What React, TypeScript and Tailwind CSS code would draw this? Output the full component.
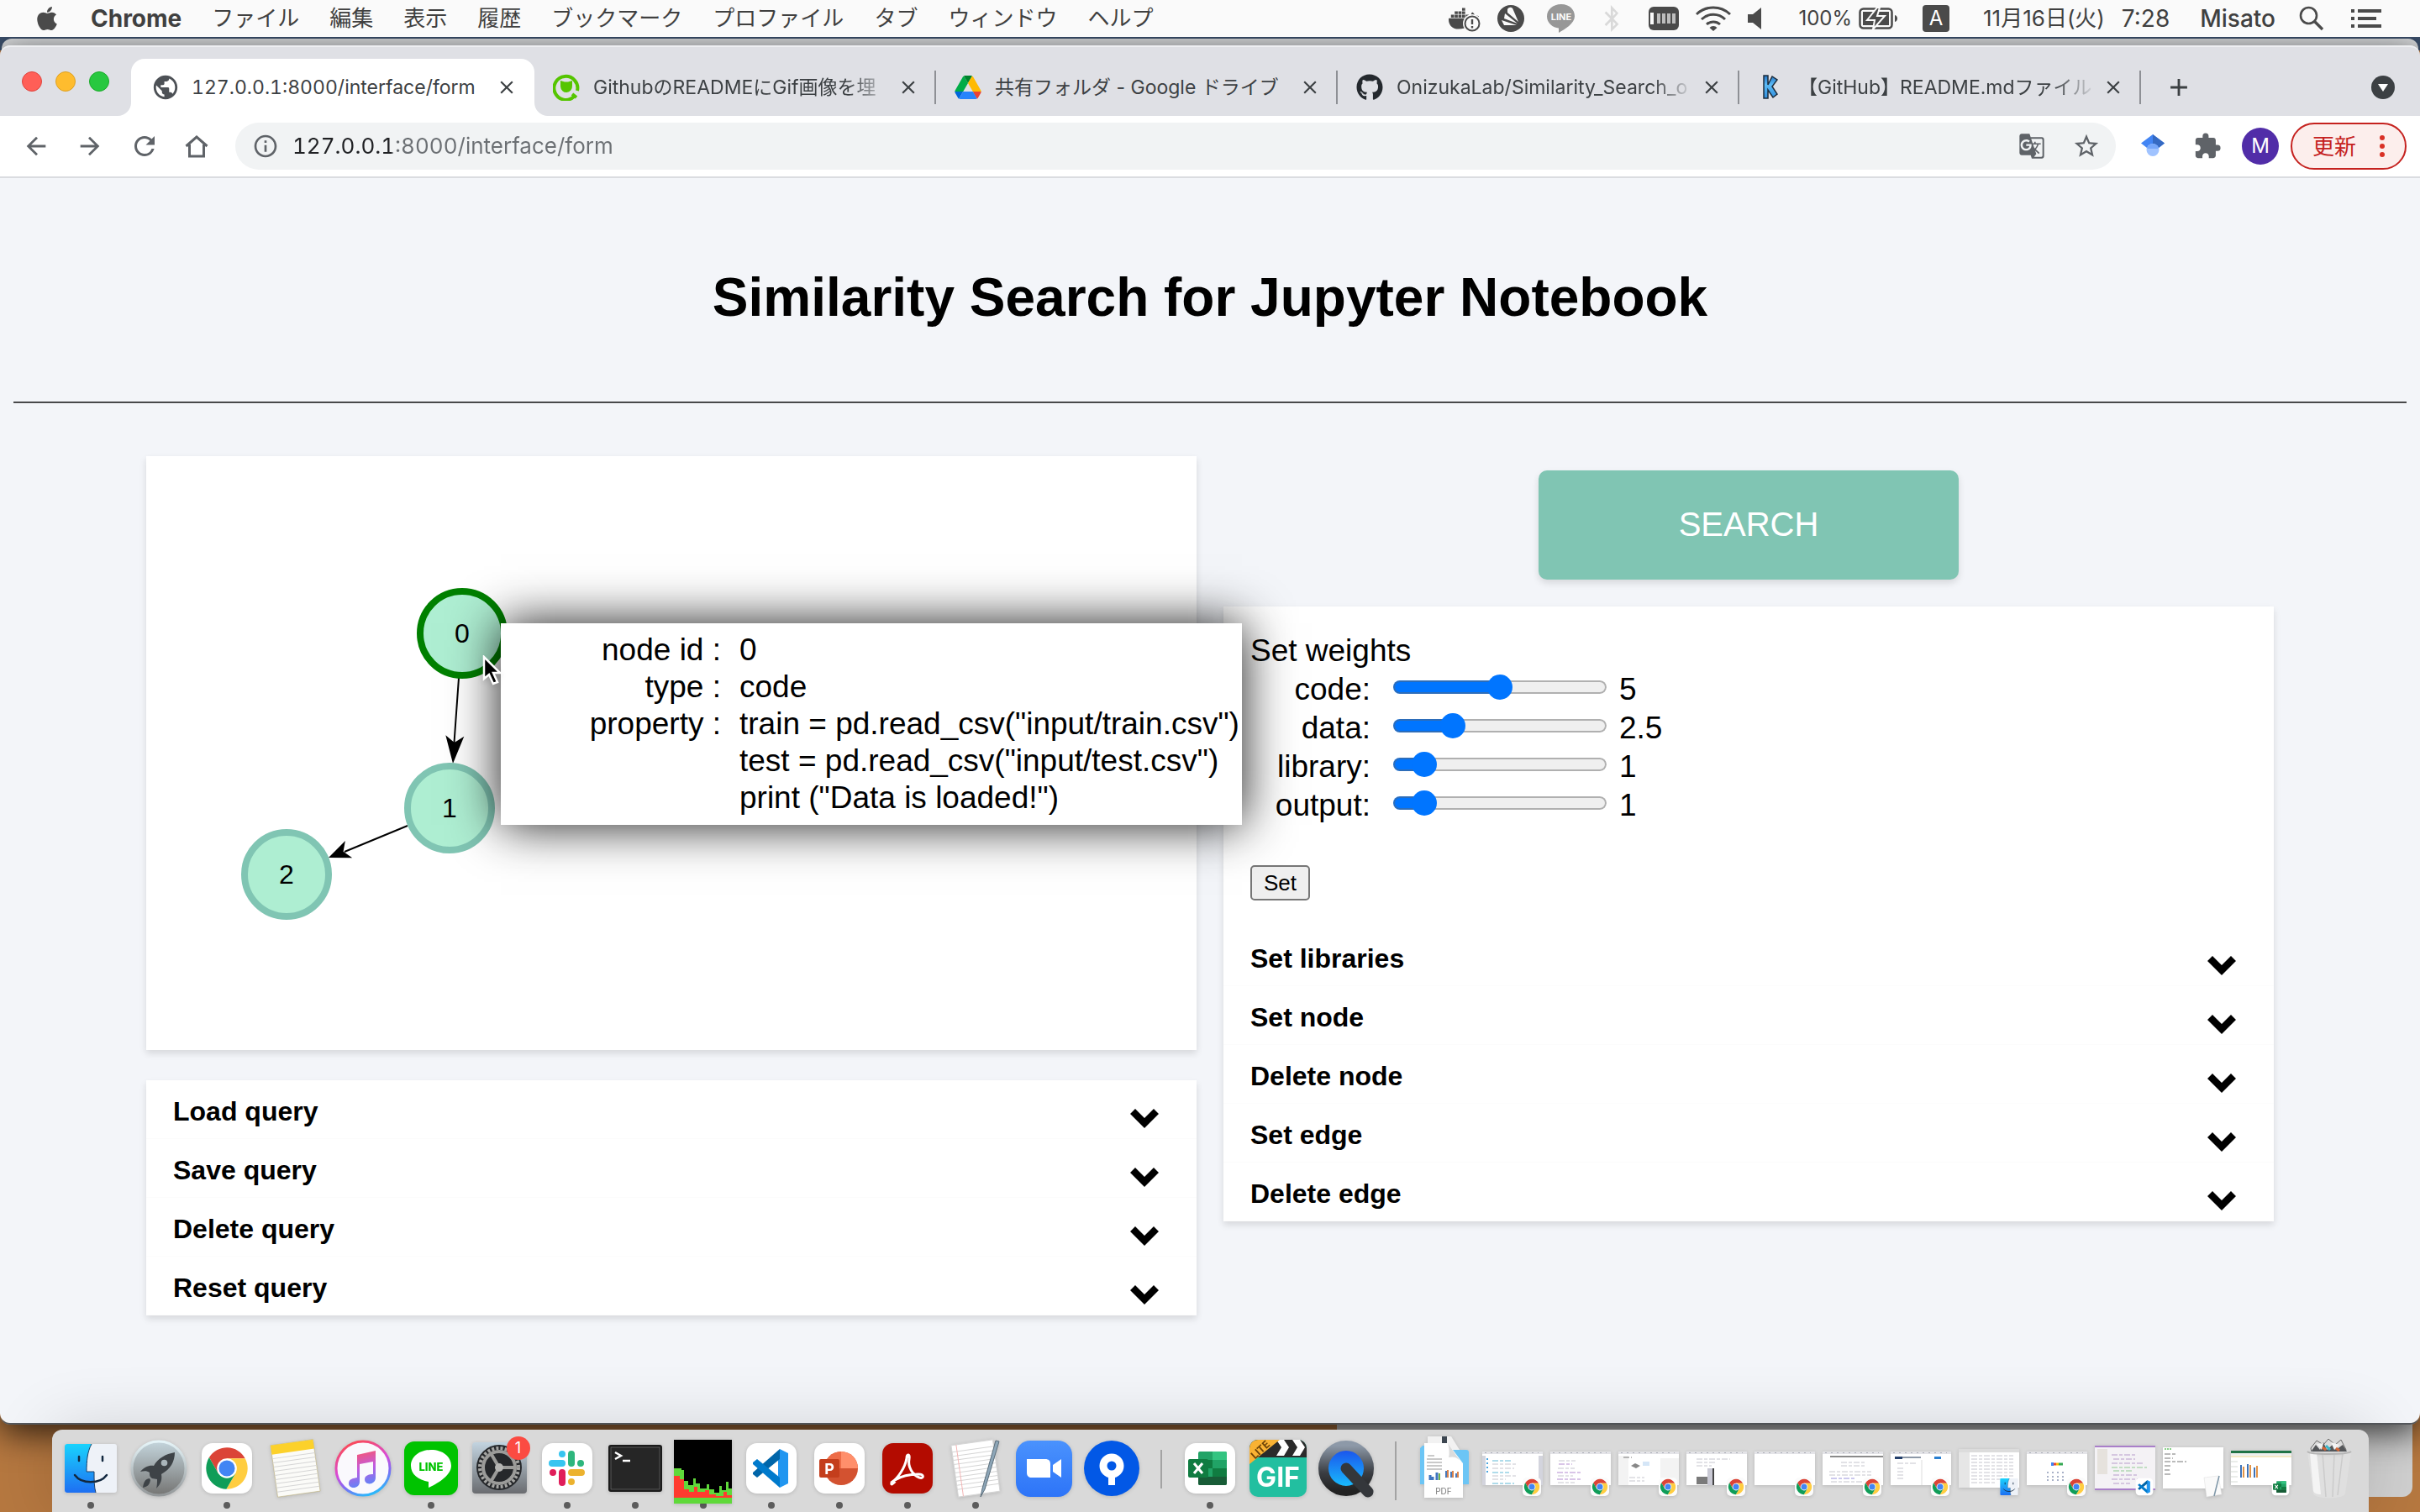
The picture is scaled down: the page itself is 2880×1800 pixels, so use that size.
import React, { useState } from 'react';
import { FaApple, FaBluetoothB, FaDocker, FaGithub } from 'react-icons/fa';
import {
  MdAdd,
  MdArrowBack,
  MdArrowForward,
  MdClose,
  MdExtension,
  MdGTranslate,
  MdInfoOutline,
  MdPublic,
  MdRefresh,
  MdStarOutline,
} from 'react-icons/md';

/* ---------- Menu bar ---------- */

const MENUS = ['ファイル', '編集', '表示', '履歴', 'ブックマーク', 'プロファイル', 'タブ', 'ウィンドウ', 'ヘルプ'];

function MenuBar() {
  return (
    <header className="relative z-30 flex h-11 items-center justify-between bg-[#fafafa] text-[26px] leading-9 text-[#404040]">
      <nav className="flex items-center gap-9 pl-10">
        <button aria-label="Apple" className="text-[#4a4a4a]">
          <FaApple size={32} />
        </button>
        <button className="text-[28px] leading-9 font-bold">Chrome</button>
        {MENUS.map((m) => (
          <button key={m}>{m}</button>
        ))}
      </nav>
      <div className="flex items-center pr-[46px]">
        <span className="relative mr-[22px] flex text-[#4a4a4a]">
          <FaDocker size={36} />
          <svg viewBox="0 0 24 24" className="absolute -right-1 top-3 size-6">
            <circle cx="12" cy="12" r="11" fill="#fafafa" />
            <circle cx="12" cy="12" r="8.500" fill="none" stroke="#4a4a4a" strokeWidth="2" />
            <path d="M12 7v6M12 15v2.4" stroke="#4a4a4a" strokeWidth="2.4" />
          </svg>
        </span>
        <svg viewBox="0 0 32 32" className="mr-[26px] size-8">
          <circle cx="16" cy="16" r="16" fill="#4a4a4a" />
          <path d="M12 5c2-3 6-3 7 1l6 14L12 9zM9 10l15 12-16-6zM5 18l18 6H8z" fill="#fafafa" />
        </svg>
        <svg viewBox="0 0 36 34" className="mr-8 h-[34px] w-9">
          <path d="M18 0C8 0 1 6.500 1 14.500S8 28 15 28.500V34c7-4 19-11 19-19.500C34 6.500 28 0 18 0z" fill="#979797" />
          <text x="18" y="19" textAnchor="middle" fontSize="11" fontWeight="700" fill="#fafafa" className="font-['Inter',sans-serif]">LINE</text>
        </svg>
        <FaBluetoothB size={32} className="mr-7 -ml-1.5 text-[#d9d9d9]" />
        <svg viewBox="0 0 36 28" className="mr-5 h-7 w-9">
          <rect width="36" height="28" rx="6" fill="#4a4a4a" />
          <path d="M2 7h4v14H2z" fill="#fafafa" />
          <path d="M10 8h4v12h-4zM16 8h4v12h-4zM22 8h4v12h-4zM28 8h4v12h-4z" fill="#bdbdbd" />
        </svg>
        <svg viewBox="0 0 42 30" className="mr-5 h-[30px] w-[42px]" fill="none" stroke="#4a4a4a" strokeWidth="3">
          <path d="M1 10a29 29 0 0 1 40 0M7 16a20 20 0 0 1 28 0M13 22a12 12 0 0 1 16 0" />
          <path d="M16.500 26a6 6 0 0 1 9 0L21 30z" fill="#4a4a4a" stroke="none" />
        </svg>
        <svg viewBox="0 0 16 26" className="mr-[44px] h-[26px] w-4" fill="#4a4a4a">
          <path d="M0 8h6l10-8v26L6 18H0z" />
        </svg>
        <span className="mr-2 text-2xl">100%</span>
        <svg viewBox="0 0 48 26" className="mr-[28px] h-[26px] w-12">
          <rect x="1.500" y="1.500" width="38" height="23" rx="4" fill="none" stroke="#4a4a4a" strokeWidth="2.500" />
          <rect x="5" y="5" width="31" height="16" fill="#4a4a4a" />
          <path d="M43 9v8c4-1 4-7 0-8z" fill="#4a4a4a" />
          <path d="M22 0L10 15h9l-2 11 14-16h-9l3-10z" fill="#4a4a4a" stroke="#fafafa" strokeWidth="2" />
        </svg>
        <span className="mr-[40px] flex size-8 items-center justify-center rounded-[4px] bg-[#4a4a4a] text-2xl text-white">A</span>
        <span className="mr-5">11月16日(火)</span>
        <span className="mr-9 text-[28px] leading-9">7:28</span>
        <span className="mr-7 text-[28px] leading-9 font-medium">Misato</span>
        <button aria-label="Spotlight" className="mr-8">
          <svg viewBox="0 0 30 30" className="size-[30px]" fill="none" stroke="#4a4a4a" strokeWidth="2.600">
            <circle cx="11.500" cy="11.500" r="9.500" />
            <path d="M18.500 18.500L28 28" strokeWidth="3.400" />
          </svg>
        </button>
        <button aria-label="Notification center">
          <svg viewBox="0 0 36 22" className="h-[22px] w-9" fill="#4a4a4a">
            <path d="M0 0h4v4H0zM8 0h28v4H8zM0 9h4v4H0zM8 9h22v4H8zM0 18h4v4H0zM8 18h28v4H8z" />
          </svg>
        </button>
      </div>
    </header>
  );
}

/* ---------- Browser chrome ---------- */

const QiitaIcon = () => (
  <svg viewBox="0 0 32 32" className="size-8 shrink-0" fill="none" stroke="#55c500">
    <path d="M25 27A14 14 0 1 1 29 20" strokeWidth="4" />
    <path d="M9 8l5 1.500h4L23 8v6a7 7.500 0 1 1-14 1z" fill="#55c500" stroke="none" />
    <path d="M23 24l5 4" strokeWidth="4" />
  </svg>
);

const DriveIcon = () => (
  <svg viewBox="0 0 87.300 78" className="h-7 w-8 shrink-0">
    <path d="m6.600 66.850 3.850 6.650c.8 1.400 1.950 2.500 3.300 3.300l13.750-23.800h-27.500c0 1.550.4 3.100 1.200 4.500z" fill="#0066da" />
    <path d="m43.650 25-13.750-23.800c-1.350.8-2.500 1.900-3.300 3.300l-25.400 44a9.060 9.060 0 0 0-1.200 4.500h27.500z" fill="#00ac47" />
    <path d="m73.550 76.800c1.350-.8 2.500-1.900 3.300-3.300l1.600-2.750 7.650-13.250c.8-1.400 1.200-2.950 1.200-4.500h-27.502l5.852 11.500z" fill="#ea4335" />
    <path d="m43.650 25 13.750-23.800c-1.350-.8-2.900-1.200-4.500-1.200h-18.500c-1.600 0-3.150.45-4.500 1.200z" fill="#00832d" />
    <path d="m59.800 53h-32.300l-13.750 23.800c1.350.8 2.900 1.200 4.500 1.200h50.800c1.600 0 3.150-.45 4.500-1.200z" fill="#2684fc" />
    <path d="m73.400 26.500-12.700-22c-.8-1.400-1.950-2.500-3.300-3.300l-13.750 23.800 16.150 28h27.450c0-1.550-.4-3.100-1.200-4.500z" fill="#ffba00" />
  </svg>
);

const KIcon = () => (
  <svg viewBox="0 0 32 32" className="size-8 shrink-0">
    <defs>
      <linearGradient id="kfill" x1="0" y1="0" x2="0" y2="1">
        <stop offset="0" stopColor="#2273c4" />
        <stop offset="0.400" stopColor="#5cbcf7" />
        <stop offset="1" stopColor="#2f8ddb" />
      </linearGradient>
    </defs>
    <path d="M7 2h5v11l5-10 6 4-6 8 6 9-5 4-6-9v10H7z" fill="url(#kfill)" stroke="#1d2d3c" strokeWidth="1.500" />
  </svg>
);

interface TabData {
  title: string;
  icon: React.ReactNode;
  fades: boolean;
}

const TABS: TabData[] = [
  { title: 'GithubのREADMEにGif画像を埋', icon: <QiitaIcon />, fades: true },
  { title: '共有フォルダ - Google ドライブ', icon: <DriveIcon />, fades: false },
  { title: 'OnizukaLab/Similarity_Search_o', icon: <FaGithub size={32} className="shrink-0 text-[#24292e]" />, fades: true },
  { title: '【GitHub】README.mdファイル', icon: <KIcon />, fades: true },
];

function TabStrip() {
  return (
    <div className="flex h-[84px] items-end rounded-t-xl border-t-2 border-[#eeeff2] bg-[#dfe0e5] text-[23px] leading-8 text-[#3c4043]">
      <div className="flex h-[68px] w-[156px] shrink-0 items-center gap-4 pb-3.5 pl-[26px]">
        <button aria-label="Close window" className="size-6 rounded-full border border-[#e0443e] bg-[#ff5f57]" />
        <button aria-label="Minimise window" className="size-6 rounded-full border border-[#dea123] bg-[#febc2e]" />
        <button aria-label="Zoom window" className="size-6 rounded-full border border-[#1aab29] bg-[#28c840]" />
      </div>
      <div className="relative flex h-[68px] w-[480px] items-center rounded-t-2xl bg-white pr-5 pl-6">
        <svg viewBox="0 0 16 16" className="absolute bottom-0 -left-4 size-4" fill="#fff">
          <path d="M16 0v16H0A16 16 0 0 0 16 0z" />
        </svg>
        <svg viewBox="0 0 16 16" className="absolute -right-4 bottom-0 size-4" fill="#fff">
          <path d="M0 0v16h16A16 16 0 0 1 0 0z" />
        </svg>
        <MdPublic size={34} className="shrink-0 text-[#4d5156]" />
        <a href="#form" className="ml-3.5 min-w-0 flex-1 overflow-hidden whitespace-nowrap tabular-nums">
          127.0.0.1:8000/interface/form
        </a>
        <button aria-label="Close tab" className="ml-2">
          <MdClose size={26} />
        </button>
      </div>
      {TABS.map((t) => (
        <div key={t.title} className="flex h-[68px] w-[478px] min-w-0 items-center">
          <div className="flex h-10 w-full items-center border-r-2 border-[#8e9095] pr-[18px] pl-[22px]">
            {t.icon}
            <a
              href="#tab"
              className={
                t.fades
                  ? 'ml-4 min-w-0 flex-1 overflow-hidden whitespace-nowrap [mask-image:linear-gradient(to_right,black_86%,transparent)]'
                  : 'ml-4 min-w-0 flex-1 overflow-hidden whitespace-nowrap'
              }
            >
              {t.title}
            </a>
            <button aria-label="Close tab" className="ml-2">
              <MdClose size={26} />
            </button>
          </div>
        </div>
      ))}
      <div className="flex h-[68px] flex-1 items-center justify-between pr-[30px] pl-7">
        <button aria-label="New tab">
          <MdAdd size={34} />
        </button>
        <button aria-label="Search tabs">
          <svg viewBox="0 0 28 28" className="size-7">
            <circle cx="14" cy="14" r="14" fill="#3c4043" />
            <path d="M8 10h12l-6 9z" fill="#fff" />
          </svg>
        </button>
      </div>
    </div>
  );
}

function Toolbar() {
  return (
    <div className="flex h-[74px] items-center border-b-2 border-[#dadce0] bg-white pr-4 pl-[26px] text-[#5f6368]">
      <button aria-label="Back" className="mr-[30px]">
        <MdArrowBack size={34} />
      </button>
      <button aria-label="Forward" className="mr-[30px]">
        <MdArrowForward size={34} />
      </button>
      <button aria-label="Reload" className="mr-[30px]">
        <MdRefresh size={36} />
      </button>
      <button aria-label="Home" className="mr-8">
        <svg viewBox="0 0 28 28" className="size-7" fill="none" stroke="#5f6368" strokeWidth="3">
          <path d="M1.500 14L14 3l12.500 11M5.500 12v14h17V12" />
        </svg>
      </button>
      <div className="flex h-14 flex-1 items-center rounded-full bg-[#f1f3f4] pr-[18px] pl-5">
        <MdInfoOutline size={32} className="shrink-0" />
        <label htmlFor="address" className="sr-only">
          Address
        </label>
        <input
          id="address"
          defaultValue="127.0.0.1:8000/interface/form"
          className="ml-4 h-10 flex-1 bg-[linear-gradient(to_right,#202124_118px,#6b6f73_118px)] bg-clip-text text-[26px] leading-10 text-transparent tabular-nums outline-none"
        />
        <button aria-label="Translate" className="mr-8">
          <MdGTranslate size={32} />
        </button>
        <button aria-label="Bookmark">
          <MdStarOutline size={34} />
        </button>
      </div>
      <button aria-label="Scholar" className="mr-[34px] ml-[30px]">
        <svg viewBox="0 0 28 28" className="size-7">
          <path d="M14 0L0 10.500 7 16h14l7-5.500z" fill="#4285f4" />
          <path d="M14 0v13l7 3 7-5.500z" fill="#356ac3" />
          <circle cx="14" cy="18.500" r="7.500" fill="#a0c3ff" />
          <path d="M7 16a7.500 7.500 0 0 1 14 0l-1 1H8z" fill="#76a7fa" />
        </svg>
      </button>
      <button aria-label="Extensions" className="mr-6">
        <MdExtension size={34} />
      </button>
      <button aria-label="Profile" className="mr-3.5 flex size-11 items-center justify-center rounded-full bg-[#512da8] text-2xl text-white">
        M
      </button>
      <button className="flex h-14 items-center rounded-full border-2 border-[#c5221f] bg-[#fceeec] pr-6 pl-6 text-[26px] text-[#c5221f]">
        更新
        <svg viewBox="0 0 6 26" className="ml-7 h-[26px] w-1.5" fill="#d93025">
          <circle cx="3" cy="3" r="3" />
          <circle cx="3" cy="13" r="3" />
          <circle cx="3" cy="23" r="3" />
        </svg>
      </button>
    </div>
  );
}

/* ---------- Page ---------- */

interface GraphNode {
  id: number;
  x: number;
  y: number;
  ring: string;
}

const NODES: GraphNode[] = [
  { id: 0, x: 376, y: 211, ring: '#008000' },
  { id: 1, x: 361, y: 419, ring: '#80c5b3' },
  { id: 2, x: 167, y: 498, ring: '#80c5b3' },
];

const PROPERTIES = [
  { label: 'node id :', lines: ['0'] },
  { label: 'type :', lines: ['code'] },
  { label: 'property :', lines: ['train = pd.read_csv("input/train.csv")', 'test = pd.read_csv("input/test.csv")', 'print ("Data is loaded!")'] },
];

function Graph() {
  return (
    <section className="relative h-[707px] bg-white shadow-[0_4px_8px_rgba(0,0,0,0.12)]">
      <svg className="absolute inset-0 h-full w-full" role="img" aria-label="Query graph">
        <path d="M372 264L366 348M311 440L236 471" stroke="#000" strokeWidth="2" />
        <path d="M0 0L-33 -11L-25 0L-33 11Z" transform="translate(365 366) rotate(94)" />
        <path d="M0 0L-26 -11L-19 0L-26 11Z" transform="translate(217 478) rotate(157.700)" />
        {NODES.map((n) => (
          <g key={n.id}>
            <circle cx={n.x} cy={n.y} r="50" fill="#aeeed2" stroke={n.ring} strokeWidth="8" />
            <text x={n.x} y={n.y + 11} textAnchor="middle" fontSize="32">
              {n.id}
            </text>
          </g>
        ))}
      </svg>
      <div role="tooltip" className="absolute top-[199px] left-[422px] z-10 w-[882px] bg-white py-2.5 text-[37px] leading-11 shadow-[0_0_56px_rgba(0,0,0,0.9)]">
        {PROPERTIES.map((p) => (
          <div key={p.label} className="flex">
            <div className="w-[262px] shrink-0 text-right">{p.label}</div>
            <div className="ml-[22px] whitespace-nowrap">
              {p.lines.map((l) => (
                <div key={l}>{l}</div>
              ))}
            </div>
          </div>
        ))}
      </div>
      <svg viewBox="0 0 26 36" className="absolute top-[237px] left-[400px] z-20 h-9 w-[26px] drop-shadow-md">
        <path d="M2 2v26l6-5 5 11 5-2-5-11h8z" fill="#000" stroke="#fff" strokeWidth="2.500" />
      </svg>
    </section>
  );
}

function Accordion({ items }: { items: string[] }) {
  return (
    <ul>
      {items.map((item) => (
        <li key={item} className="border-b border-[#fcfcfc]">
          <button aria-expanded="false" className="flex h-[69px] w-full items-center justify-between pr-[45px] pl-8 text-left text-[32px] leading-9 font-bold">
            <span className="pt-1">{item}</span>
            <svg viewBox="0 0 34 23" className="mt-[22px] h-[23px] w-[34px]">
              <path d="M17 23L0 6 6 0l11 11L28 0l6 6z" />
            </svg>
          </button>
        </li>
      ))}
    </ul>
  );
}

function Weight({ name, initial }: { name: string; initial: number }) {
  const [value, setValue] = useState(initial);
  const fill = 15 + (value / 10) * 224;
  return (
    <div className="flex h-[46px] items-center">
      <label htmlFor={`w-${name}`} className="w-[143px] text-right">
        {name}:
      </label>
      <input
        id={`w-${name}`}
        type="range"
        min="0"
        max="10"
        step="0.5"
        value={value}
        onChange={(e) => setValue(Number(e.target.value))}
        className="mr-[15px] mb-1.5 ml-[27px] h-4 w-[254px] appearance-none rounded-full bg-[#efefef] bg-[linear-gradient(#0075ff,#0075ff)] bg-no-repeat shadow-[inset_0_0_0_2px_rgba(100,100,100,0.45)] [&::-webkit-slider-thumb]:size-[30px] [&::-webkit-slider-thumb]:appearance-none [&::-webkit-slider-thumb]:rounded-full [&::-webkit-slider-thumb]:bg-[#0075ff]"
        style={{ backgroundSize: `${fill}px 100%` }}
      />
      <output htmlFor={`w-${name}`}>{value}</output>
    </div>
  );
}

function Page() {
  return (
    <main className="flex-1 rounded-b-xl bg-[#f3f5f9] font-['Liberation_Sans',Arial,sans-serif] text-black">
      <h1 className="pt-[104px] pb-[86px] text-center text-[64px] leading-[76px] font-bold">Similarity Search for Jupyter Notebook</h1>
      <hr className="mx-4 border-t-2 border-[#48494b]" />
      <div className="grid grid-cols-2 items-start gap-8 px-[174px] pt-[63px]">
        <div className="relative z-10 flex flex-col gap-9">
          <Graph />
          <section className="bg-white shadow-[0_4px_8px_rgba(0,0,0,0.12)]">
            <Accordion items={['Load query', 'Save query', 'Delete query', 'Reset query']} />
          </section>
        </div>
        <div className="flex flex-col items-center gap-8 pt-[17px]">
          <button className="h-[130px] w-[500px] rounded-[10px] bg-[#80c5b3] pb-0.5 text-[40px] leading-[48px] text-white shadow-[0_4px_8px_rgba(0,0,0,0.12)]">SEARCH</button>
          <section className="w-full bg-white pt-[30px] shadow-[0_4px_8px_rgba(0,0,0,0.12)]">
            <form className="px-8 text-[37px]" onSubmit={(e) => e.preventDefault()}>
              <div className="h-[46px] leading-[46px]">Set weights</div>
              <Weight name="code" initial={5} />
              <Weight name="data" initial={2.5} />
              <Weight name="library" initial={1} />
              <Weight name="output" initial={1} />
              <button className="mt-12 mb-8 block h-[42px] rounded-[5px] border-2 border-[#767676] bg-[#efefef] px-3.5 text-[26px] leading-8">Set</button>
            </form>
            <Accordion items={['Set libraries', 'Set node', 'Delete node', 'Set edge', 'Delete edge']} />
          </section>
        </div>
      </div>
    </main>
  );
}

/* ---------- Dock ---------- */

const svgFont = "font-['Inter',sans-serif]";

function ChromeLogo({ x = 0, y = 0, size = 48 }: { x?: number; y?: number; size?: number }) {
  return (
    <svg x={x} y={y} width={size} height={size} viewBox="0 0 48 48">
      <path d="M43.300 13.500H24L14.910 29.250 5.260 12.540A22 22 0 0 1 43.300 13.500Z" fill="#db4437" />
      <path d="M43.300 13.500H24L14.910 29.250 5.260 12.540A22 22 0 0 1 43.300 13.500Z" fill="#ffcd40" transform="rotate(120 24 24)" />
      <path d="M43.300 13.500H24L14.910 29.250 5.260 12.540A22 22 0 0 1 43.300 13.500Z" fill="#0f9d58" transform="rotate(-120 24 24)" />
      <circle cx="24" cy="24" r="10.500" fill="#fff" />
      <circle cx="24" cy="24" r="8.500" fill="#4285f4" />
    </svg>
  );
}

function FinderArt() {
  return (
    <g>
      <defs>
        <linearGradient id="finder" x1="0" y1="0" x2="0" y2="1">
          <stop offset="0" stopColor="#19d3fd" />
          <stop offset="1" stopColor="#1e6ff2" />
        </linearGradient>
      </defs>
      <rect x="1" y="3" width="62" height="58" rx="3" fill="#eef2f8" />
      <path d="M4 3H33c-5 9-6 20-6 33h9c0 10 0 18 2 25H4a3 3 0 0 1-3-3V6a3 3 0 0 1 3-3z" fill="url(#finder)" />
      <path d="M33 3c-5 9-6 20-6 33h9c0 10 0 18 2 25" fill="none" stroke="#1c3f66" strokeWidth="1" />
      <path d="M18 18v5M46 18v5M13 40c8 11 30 11 38 0" fill="none" stroke="#12283f" strokeWidth="2.500" strokeLinecap="round" />
    </g>
  );
}

function CodeArt() {
  return (
    <g>
      <path d="M42 9L52 14V50L42 55L40 46V18Z" fill="#2196f0" />
      <path d="M42 9V21L15 43L10 39V37Z" fill="#0065a9" />
      <path d="M42 55V43L15 21L10 25V27Z" fill="#007acc" />
    </g>
  );
}

function ExcelArt() {
  return (
    <g>
      <rect x="18" y="12" width="34" height="40" rx="2" fill="#21a366" />
      <path d="M35 12h15a2 2 0 0 1 2 2v8H35z" fill="#33c481" />
      <path d="M18 22h17v10H18zM35 32h17v10H35z" fill="#107c41" />
      <path d="M18 42h34v8a2 2 0 0 1-2 2H20a2 2 0 0 1-2-2z" fill="#185c37" />
      <rect x="6" y="21" width="24" height="22" rx="2" fill="#107c41" />
      <path d="M13 26l10 12M23 26L13 38" stroke="#fff" strokeWidth="3" />
    </g>
  );
}

const Tile = ({ fill = '#fff' }: { fill?: string }) => <rect x="2" y="2" width="60" height="60" rx="13" fill={fill} />;

function Gear() {
  return (
    <g>
      <defs>
        <linearGradient id="prefs" x1="0" y1="0" x2="0" y2="1">
          <stop offset="0" stopColor="#c3d4e0" />
          <stop offset="1" stopColor="#6a6c70" />
        </linearGradient>
      </defs>
      <rect y="1" width="65" height="61" rx="4" fill="url(#prefs)" />
      <circle cx="32" cy="31" r="27" fill="#26282b" />
      <circle cx="32" cy="31" r="23" fill="none" stroke="#a5a5a3" strokeWidth="4" strokeDasharray="3 2.200" />
      <circle cx="32" cy="31" r="19" fill="none" stroke="#9b9b99" strokeWidth="4" />
      <path d="M32 31H51M32 31L22 14M32 31L22 48" stroke="#9b9b99" strokeWidth="4" />
      <circle cx="32" cy="31" r="5" fill="#b5b5b3" />
    </g>
  );
}

const APPS: { name: string; running?: boolean; badge?: string; art: React.ReactNode }[] = [
  { name: 'Finder', running: true, art: <FinderArt /> },
  {
    name: 'Launchpad',
    art: (
      <g>
        <defs>
          <linearGradient id="pad" x1="0" y1="0" x2="0" y2="1">
            <stop offset="0" stopColor="#c4d5dc" />
            <stop offset="1" stopColor="#757573" />
          </linearGradient>
          <linearGradient id="padrim" x1="0" y1="0" x2="0" y2="1">
            <stop offset="0" stopColor="#e6f5f9" />
            <stop offset="1" stopColor="#94989a" />
          </linearGradient>
        </defs>
        <circle cx="32" cy="32" r="32" fill="url(#pad)" stroke="url(#padrim)" strokeWidth="3" />
        <path d="M51 13C40 15 31 20 26 29c-5-1-11 1-16 7 5-1 8-1 11 1 0 3 0 5 3 7l6 1c0 4 0 7-1 11 6-6 7-11 6-17C46 33 51 24 51 13zM21 44c-6 1-7 5-8 11 5-1 8-3 9-9z" fill="#3e4347" />
        <circle cx="38.500" cy="25.500" r="3.800" fill="#a9b5ba" />
      </g>
    ),
  },
  { name: 'Chrome', running: true, art: <g><Tile /><ChromeLogo x={5} y={5} size={54} /></g> },
  {
    name: 'Notes',
    art: (
      <g transform="rotate(-8 32 32)">
        <rect x="7" y="1" width="51" height="62" fill="#fbfbf8" stroke="#b9a96a" strokeWidth="0.500" />
        <rect x="7" y="1" width="51" height="11" fill="#fcd12b" />
        <path d="M7 17h51M7 22h51M7 27h51M7 32h51M7 37h51M7 42h51M7 47h51M7 52h51M7 57h51" stroke="#d5d5d5" strokeWidth="1" />
      </g>
    ),
  },
  {
    name: 'Music',
    art: (
      <g>
        <defs>
          <linearGradient id="ring" x1="0.300" y1="0" x2="0.700" y2="1">
            <stop offset="0" stopColor="#fc4a55" />
            <stop offset="0.450" stopColor="#d94bd8" />
            <stop offset="0.700" stopColor="#7d6bf5" />
            <stop offset="1" stopColor="#22c0fb" />
          </linearGradient>
          <linearGradient id="note" x1="0.300" y1="0" x2="0.500" y2="1">
            <stop offset="0" stopColor="#f9556b" />
            <stop offset="0.500" stopColor="#c25be0" />
            <stop offset="1" stopColor="#5a86f8" />
          </linearGradient>
        </defs>
        <circle cx="32" cy="32" r="32" fill="#faf9fd" stroke="url(#ring)" strokeWidth="3" />
        <path d="M25 16l22-5v32c0 9-13 10-13 2 0-5 6-6 10-6V24l-16 3v21c0 9-13 9-13 2 0-6 6-6 10-7z" fill="url(#note)" />
      </g>
    ),
  },
  {
    name: 'LINE',
    running: true,
    art: (
      <g>
        <rect width="64" height="64" rx="12" fill="#00c300" />
        <path d="M32 10C18 10 8 18 8 29c0 10 9 17 21 19v7c9-4 27-14 27-26C56 18 46 10 32 10z" fill="#fff" />
        <text x="32" y="35" textAnchor="middle" fontSize="13" fontWeight="800" fill="#00c300" className={svgFont}>LINE</text>
      </g>
    ),
  },
  { name: 'System Preferences', badge: '1', art: <Gear /> },
  {
    name: 'Slack',
    running: true,
    art: (
      <g>
        <Tile />
        <g strokeWidth="8" strokeLinecap="round">
          <path d="M14 26h12M26 15v0" stroke="#36c5f0" />
          <path d="M37 15v11M48 26v0" stroke="#2eb67d" />
          <path d="M37 37h12M37 48v0" stroke="#ecb22e" />
          <path d="M26 37v12M15 37v0" stroke="#e01e5a" />
        </g>
      </g>
    ),
  },
  {
    name: 'Terminal',
    running: true,
    art: (
      <g>
        <rect x="0" y="4" width="64" height="56" rx="3" fill="#1b1b1b" />
        <rect x="3" y="7" width="58" height="50" fill="#262626" stroke="#8a8a8a" strokeWidth="0.500" />
        <path d="M8 13l7 4-7 4M17 23h9" fill="none" stroke="#fff" strokeWidth="2.500" />
      </g>
    ),
  },
  {
    name: 'Activity Monitor',
    running: true,
    art: (
      <g>
        <rect x="-3" y="-2" width="69" height="69" fill="#000" />
        <path d="M-3 32h9v2h3v13h5v5h6v-8h3v6h5v6h8v-5h3v6h6v4h6v-8h3v5h5v-10h3v8h4v18H-3z" fill="#5fd93a" />
        <path d="M-3 41h7v4h5v12h6v3h6v-6h4v6h9v-2h5v5h8v2h9v-5h4v4h6v3H-3z" fill="#ff3b2f" />
      </g>
    ),
  },
  { name: 'Visual Studio Code', running: true, art: <g><Tile /><CodeArt /></g> },
  {
    name: 'PowerPoint',
    running: true,
    art: (
      <g>
        <Tile />
        <circle cx="34" cy="32" r="20" fill="#d35230" />
        <path d="M34 12a20 20 0 0 1 20 20H34z" fill="#ff8f6b" />
        <path d="M34 12a20 20 0 0 0-20 20h20z" fill="#ed6c47" />
        <rect x="8" y="21" width="24" height="22" rx="2" fill="#c43e1c" />
        <text x="20" y="39" textAnchor="middle" fontSize="18" fontWeight="700" fill="#fff" className={svgFont}>P</text>
      </g>
    ),
  },
  {
    name: 'Acrobat',
    running: true,
    art: (
      <g>
        <Tile fill="#b30b00" />
        <path d="M14 48c6-4 15-16 17-28 0-6 4-5 3 1-2 9 4 19 12 22 6 2 6-4-1-4-9 0-20 2-28 7-6 4-5 7-1 3z" fill="none" stroke="#fff" strokeWidth="3" />
      </g>
    ),
  },
  {
    name: 'TextEdit',
    running: true,
    art: (
      <g>
        <g transform="rotate(-8 32 32)">
          <rect x="7" y="1" width="50" height="62" fill="#fff" stroke="#d5d5d5" />
          <path d="M7 9h50M7 14h50M7 19h50M7 24h50M7 29h50M7 34h50M7 39h50M7 44h50M7 49h50M7 54h50" stroke="#d5d5d5" strokeWidth="1" />
          <path d="M13 1v62" stroke="#f3b6b6" />
        </g>
        <path d="M56-1L40 56 38 66 43 57 60 0z" fill="#8da6b8" stroke="#5b6d7a" />
      </g>
    ),
  },
  {
    name: 'Zoom',
    art: (
      <g>
        <defs>
          <linearGradient id="zoom" x1="0" y1="0" x2="0" y2="1">
            <stop offset="0" stopColor="#4a92fd" />
            <stop offset="1" stopColor="#2d74f8" />
          </linearGradient>
        </defs>
        <rect x="-1" y="-1" width="67" height="67" rx="17" fill="url(#zoom)" />
        <path d="M12 21h22c4 0 6 2 6 6v16H18c-4 0-6-2-6-6zM43 28l10-7v22l-10-7z" fill="#fff" />
      </g>
    ),
  },
  {
    name: 'Sourcetree',
    art: (
      <g>
        <circle cx="32" cy="32" r="33" fill="#0258e6" />
        <circle cx="32" cy="29" r="10" fill="none" stroke="#fff" strokeWidth="9" />
        <path d="M28 38h8v14h-8z" fill="#fff" />
      </g>
    ),
  },
];

const RECENTS: { name: string; running?: boolean; badge?: string; art: React.ReactNode }[] = [
  { name: 'Excel', running: true, art: <g><Tile /><ExcelArt /></g> },
  {
    name: 'GIF maker',
    art: (
      <g>
        <rect x="-2" y="-2" width="68" height="68" rx="10" fill="#22bfa0" />
        <path d="M8-2h48a10 10 0 0 1 10 10v11H-2V8A10 10 0 0 1 8-2z" fill="#2b2b2b" />
        <path d="M30-2h9l6 9-6 10h-9l6-10zM49-2h9l6 9-6 10h-9l6-10z" fill="#fff" />
        <path d="M-2 27V8A10 10 0 0 1 8-2h26z" fill="#f9b233" />
        <text x="11" y="14" textAnchor="middle" fontSize="12" fontWeight="700" fill="#6b4208" transform="rotate(-43 11 10)" className={svgFont}>LITE</text>
        <text x="32" y="54" textAnchor="middle" fontSize="32" fontWeight="700" fill="#fff" className={svgFont}>GIF</text>
      </g>
    ),
  },
  {
    name: 'QuickTime Player',
    art: (
      <g>
        <defs>
          <linearGradient id="qt" x1="0" y1="0" x2="0" y2="1">
            <stop offset="0" stopColor="#8d99a8" />
            <stop offset="0.600" stopColor="#3a3d42" />
            <stop offset="1" stopColor="#222" />
          </linearGradient>
          <linearGradient id="qtin" x1="0" y1="0" x2="0" y2="1">
            <stop offset="0" stopColor="#1b48ea" />
            <stop offset="1" stopColor="#18c8ff" />
          </linearGradient>
        </defs>
        <circle cx="32" cy="32" r="27" fill="url(#qtin)" stroke="url(#qt)" strokeWidth="12" />
        <path d="M32 32L58 60" stroke="#34373b" strokeWidth="13" strokeLinecap="round" />
      </g>
    ),
  },
];

function DockApp({ name, running, badge, art }: { name: string; running?: boolean; badge?: string; art: React.ReactNode }) {
  return (
    <button aria-label={name} className="relative flex h-[98px] w-[81px] shrink-0 flex-col items-center pt-3.5">
      <svg viewBox="0 0 64 64" className="size-16 overflow-visible drop-shadow-sm">
        {art}
      </svg>
      {running && <span className="mt-2 size-2 rounded-full bg-[#5c5c5c]" />}
      {badge && (
        <span className="absolute top-2 right-1 flex size-7 items-center justify-center rounded-full bg-[#fb4b42] text-lg leading-6 text-white">{badge}</span>
      )}
    </button>
  );
}

interface Thumb {
  name: string;
  badge: 'chrome' | 'finder' | 'code' | 'text' | 'excel';
  art: React.ReactNode;
}

const rows = (d: string, color = '#c6c6ce') => <path d={d} stroke={color} strokeWidth="1" strokeDasharray="7 2 4 2" />;

const THUMBS: Thumb[] = [
  {
    name: 'Window 1',
    badge: 'chrome',
    art: (
      <g>
        <path d="M0 5h4v35H0zM67 5h5v35h-5z" fill="#d3d4dd" />
        {rows('M12 11h24M12 25h20M12 38h26', '#5fb8d6')}
        {rows('M12 15h30M12 20h26M12 29h30M12 33h16')}
        <path d="M6 8v20" stroke="#4aa5e0" strokeWidth="2" strokeDasharray="2 3" />
      </g>
    ),
  },
  { name: 'Window 2', badge: 'chrome', art: <g>{rows('M10 15h16M8 25h28M8 33h28', '#b38bd0')}{rows('M10 11h20M9 20h20M9 29h18M9 37h20')}</g> },
  {
    name: 'Window 3',
    badge: 'chrome',
    art: (
      <g>
        <path d="M0 5h12v35H0zM50 8h22v32H50z" fill="#f3f3f3" />
        <path d="M15 17l5-3 6 3-5 3z" fill="#888" />
        <path d="M29 12h8v5h-8z" fill="#d5e6f7" />
        {rows('M13 31h18M13 35h18')}
        {rows('M6 7h10', '#777')}
      </g>
    ),
  },
  {
    name: 'Window 4',
    badge: 'chrome',
    art: (
      <g>
        <path d="M31 20h2v20h-2z" fill="#444" />
        <path d="M25 20h6v20h-6z" fill="#c9c9d4" />
        <path d="M12 30h13v9H12z" fill="#7a7a7a" />
        {rows('M12 9h40M12 13h22M12 17h18')}
      </g>
    ),
  },
  { name: 'Window 5', badge: 'chrome', art: <g /> },
  {
    name: 'Window 6',
    badge: 'chrome',
    art: (
      <g>
        <path d="M9 5h63v2H9z" fill="#8b8b8b" />
        {rows('M22 13h30M22 17h28M8 24h50M8 28h50M10 36h44')}
        {rows('M10 32h28', '#9a93dd')}
      </g>
    ),
  },
  {
    name: 'Window 7',
    badge: 'chrome',
    art: (
      <g>
        <path d="M5 6h9v3H5z" fill="#24406c" />
        <path d="M14 6h22v2H14z" fill="#8d99a8" />
        <path d="M52 6h8v3h-8z" fill="#2a7fd0" />
        {rows('M8 14h24M8 20h8M8 24h8M8 28h8M8 32h8')}
        <path d="M37 10v30" stroke="#ddd" />
      </g>
    ),
  },
  {
    name: 'Window 8',
    badge: 'finder',
    art: (
      <g>
        <path d="M0-3h72v46H0z" fill="#fff" />
        <path d="M0-3h72v4H0z" fill="#dcdcdc" />
        <path d="M0 1h13v42H0z" fill="#e6e6e6" />
        {rows('M15 5h50M15 9h50M15 13h50M15 17h50M15 21h50M15 25h50M15 29h50M15 33h50M15 37h30')}
      </g>
    ),
  },
  {
    name: 'Window 9',
    badge: 'chrome',
    art: (
      <g>
        <path d="M29 15h3" stroke="#4285f4" strokeWidth="4" />
        <path d="M32 15h3" stroke="#ea4335" strokeWidth="3" />
        <path d="M35 15h3" stroke="#fbbc05" strokeWidth="3" />
        <path d="M38 15h5" stroke="#34a853" strokeWidth="3" />
        <path d="M24 25h24M24 30h24M24 34h24" stroke="#a9b2c8" strokeWidth="2" strokeDasharray="2 4" />
      </g>
    ),
  },
  {
    name: 'Window 10',
    badge: 'code',
    art: (
      <g>
        <path d="M0-7h72v53H0z" fill="#f4f2f5" />
        <path d="M0-7h72v2H0zM0 44h72v2H0z" fill="#a97fc9" />
        <path d="M3-3h12v30H3z" fill="#e6e2dd" />
        {rows('M20 4h30M22 9h26M20 14h38M22 28h30M20 33h36M22 38h20', '#b79ccb')}
        {rows('M20 19h42M22 23h22', '#8fc991')}
      </g>
    ),
  },
  {
    name: 'Window 11',
    badge: 'text',
    art: (
      <g>
        <path d="M0-5h72v49H0z" fill="#fff" />
        {rows('M2 3h14M2 8h10M2 12h26M2 17h8M2 22h6M2 27h7', '#777')}
        <path d="M2-3h8" stroke="#8bd18b" strokeWidth="2" strokeDasharray="2 1" />
      </g>
    ),
  },
  {
    name: 'Window 12',
    badge: 'excel',
    art: (
      <g>
        <path d="M0-1h72v3H0z" fill="#217346" />
        <path d="M0 2h72v3H0z" fill="#eef0ee" />
        <path d="M0 5h72v2H0z" fill="#f5e9c4" />
        <path d="M12 16v15M20 15v16M28 19v12" stroke="#3d72b8" strokeWidth="2" />
        <path d="M15 18v13M23 16v15M31 17v14" stroke="#e39447" strokeWidth="2" />
        <path d="M0 12h8M0 18h8M0 24h8M0 30h8M0 36h8" stroke="#d5dad5" />
      </g>
    ),
  },
];

function BadgeArt({ kind }: { kind: Thumb['badge'] }) {
  if (kind === 'chrome')
    return (
      <g>
        <rect width="22" height="22" rx="5" fill="#fbfbfb" />
        <ChromeLogo x={1} y={1} size={20} />
      </g>
    );
  if (kind === 'finder')
    return (
      <svg width="24" height="22" viewBox="0 0 64 64">
        <FinderArt />
      </svg>
    );
  if (kind === 'code' || kind === 'excel')
    return (
      <svg width="22" height="22" viewBox="0 0 64 64">
        <Tile />
        {kind === 'code' ? <CodeArt /> : <ExcelArt />}
      </svg>
    );
  return (
    <g>
      <path d="M1 0l17-2 4 22-18 3z" fill="#fafafa" stroke="#ddd" strokeWidth="0.500" />
      <path d="M19-2l-6 24" stroke="#7f97a8" strokeWidth="1.500" />
    </g>
  );
}

function DockWindow({ name, badge, art }: Thumb) {
  return (
    <button aria-label={name} className="flex h-[98px] w-[81px] shrink-0 justify-center pt-[26px]">
      <svg viewBox="0 0 72 54" className="h-[54px] w-[72px] overflow-visible drop-shadow-sm">
        <rect width="72" height="40" fill="#fff" />
        <path d="M0 0h72v3H0z" fill="#e4e4e8" />
        <path d="M3 1.500h64" stroke="#a9adb5" strokeDasharray="2 5" />
        {art}
        <svg x="48" y="31" width="24" height="24" overflow="visible">
          <BadgeArt kind={badge} />
        </svg>
      </svg>
    </button>
  );
}

const PdfStack = () => (
  <svg viewBox="0 0 58 74" className="h-[74px] w-[58px] drop-shadow-sm">
    <path d="M0 14l3-3h16l4 5h32a3 3 0 0 1 3 3v38H0z" fill="#6cc5f5" />
    <path d="M9 0h28l10 16H9z" fill="#f2f2f2" />
    <path d="M26 0h6v9h-6z" fill="#3c4650" />
    <path d="M5 8h28l18 24v41H5z" fill="#fff" />
    <path d="M33 8c2 8 2 14 1 17 7-2 13 1 17 9L33 8z" fill="#dcdcdc" />
    <path d="M9 23h8M8 27h18M8 31h18M8 35h18M8 39h18" stroke="#b9b9b9" strokeWidth="1.500" />
    <path d="M12 46v6M15 48v4M20 43v9" stroke="#3f74c0" strokeWidth="3" />
    <path d="M23 44v8" stroke="#6db24b" strokeWidth="2" />
    <path d="M31 41v8M37 42v7M43 44v5" stroke="#4a79b8" strokeWidth="2" />
    <path d="M33 40v9M39 41v8M45 42v7" stroke="#d9834a" strokeWidth="2" />
    <text x="28" y="69" textAnchor="middle" fontSize="10" fill="#7d7d7d" className={svgFont}>PDF</text>
  </svg>
);

const Trash = () => (
  <svg viewBox="0 0 56 72" className="h-[72px] w-14">
    <path d="M6 12l7-9 8 5 6-7 8 7 7-6 6 12-4 8H8z" fill="#dcdcdc" stroke="#6b6b6b" />
    <path d="M7 15l5-7 5 6 4-9 4 9 8-7 3 7 8-6 5 8-4 5H10z" fill="#55575a" />
    <path d="M13 7l6 7 2-8zM30 5l4 9 6-6z" fill="#f3f3f3" />
    <path d="M20 11l4 3M36 12l4 3" stroke="#d4683a" strokeWidth="3" />
    <path d="M24 9l5 5" stroke="#39b6c8" strokeWidth="3" />
    <path d="M2 16h52l-7 50c-1 7-37 7-38 0z" fill="#dfdfdf" fillOpacity="0.950" />
    <path d="M5 17h8l5 50c-4 0-8-1-9-4z" fill="#f4f4f4" />
    <path d="M20 18l4 52M34 18l-2 52M44 18l-6 50" stroke="#cbcbcb" strokeWidth="1.500" />
    <path d="M2 16c4 4 48 4 52 0" fill="none" stroke="#b5b5b5" strokeWidth="2" />
  </svg>
);

function Dock() {
  return (
    <footer className="relative z-20 flex h-[98px] justify-center rounded-t-xl bg-[#d9d9d9] px-1.5 shadow-[0_0_80px_rgba(0,0,0,0.16)]">
      {APPS.map((a) => (
        <DockApp key={a.name} {...a} />
      ))}
      <div className="mx-[17px] mt-6 h-[46px] w-0.5 bg-[#a3a3a3]" />
      {RECENTS.map((a) => (
        <DockApp key={a.name} {...a} />
      ))}
      <div className="mx-[17px] mt-3.5 h-[70px] w-0.5 bg-[#a3a3a3]" />
      <button aria-label="Documents" className="flex h-[98px] w-[81px] shrink-0 justify-center pt-2">
        <PdfStack />
      </button>
      {THUMBS.map((t) => (
        <DockWindow key={t.name} {...t} />
      ))}
      <button aria-label="Trash" className="flex h-[98px] w-[81px] shrink-0 justify-center pt-2.5">
        <Trash />
      </button>
    </footer>
  );
}

export default function App() {
  return (
    <div className="relative flex min-h-screen flex-col overflow-hidden bg-[#b67840] bg-[linear-gradient(to_bottom,#3b4f6b_0,#3b4f6b_60px,transparent_60px)] font-['Inter','Noto_Sans_CJK_JP',sans-serif]">
      <MenuBar />
      <div className="absolute inset-x-0.5 top-[46px] h-60 rounded-t-xl bg-[#d8dadc]" />
      <div className="absolute right-[9px] bottom-[18px] h-60 w-[1280px] rounded-b-xl bg-[#d0d0d0]" />
      <div className="relative z-10 mt-2.5 flex flex-1 flex-col rounded-xl border-b-2 border-[#55585c] shadow-[0_10px_40px_rgba(0,0,0,0.75)]">
        <TabStrip />
        <Toolbar />
        <Page />
      </div>
      <div className="mt-1.5 flex justify-center">
        <Dock />
      </div>
    </div>
  );
}
